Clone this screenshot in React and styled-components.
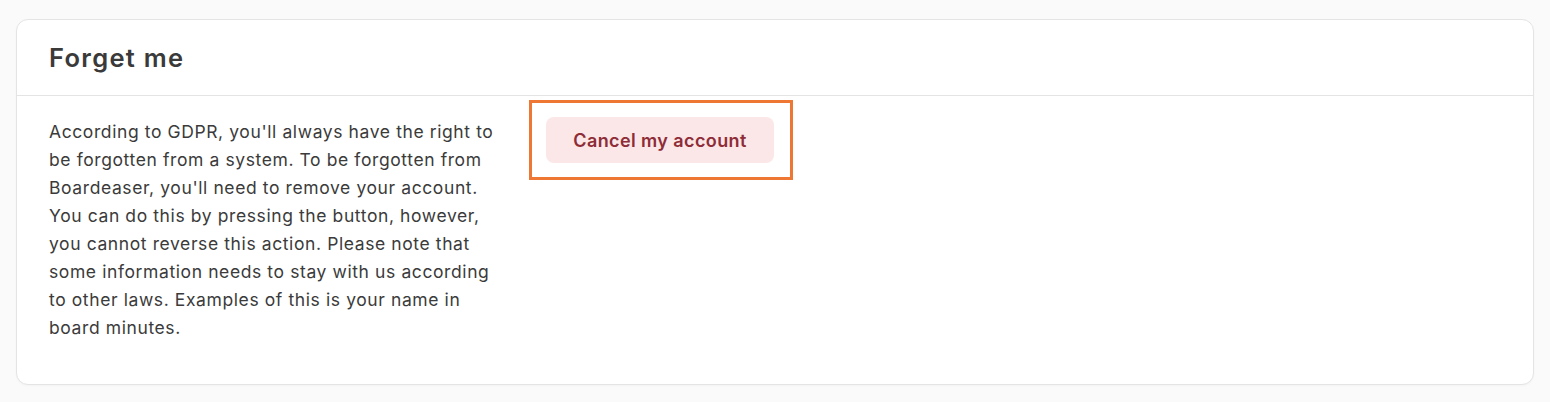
import React from "react";
import styled, { createGlobalStyle } from "styled-components";

const Global = createGlobalStyle`
  html, body { margin: 0; padding: 0; background: #fafafa; }
  body { font-family: Inter, "Open Sans", sans-serif; color: #3b3b3b; }
`;

const Page = styled.div`
  padding: 19px 16px 18px;
`;

const Card = styled.section`
  background: #ffffff;
  border: 1px solid #e4e4e4;
  border-radius: 12px;
  box-shadow: 0 1px 2px rgba(0, 0, 0, 0.03);
`;

const Header = styled.header`
  height: 75px;
  display: flex;
  align-items: center;
  padding: 0 32px;
  border-bottom: 1px solid #e4e4e4;
`;

const Title = styled.h2`
  margin: 0;
  font-size: 25.5px;
  font-weight: 600;
  color: #3a3a3a;
  letter-spacing: 1.3px;
`;

const Body = styled.div`
  display: grid;
  grid-template-columns: 450px auto;
  column-gap: 30px;
  align-items: start;
  padding: 4px 32px 42px;
`;

const Text = styled.p`
  margin: 0;
  padding-top: 18px;
  font-size: 17.5px;
  line-height: 28px;
  letter-spacing: 0.6px;
  color: #3b3b3b;
`;

const Highlight = styled.div`
  justify-self: start;
  border: 3px solid #ee7733;
  padding: 14px 16px 14px 14px;
`;

const DangerButton = styled.button`
  display: flex;
  align-items: center;
  justify-content: center;
  width: 228px;
  height: 46px;
  border: none;
  border-radius: 8px;
  background: #fbe7e7;
  color: #8e2c37;
  font-family: inherit;
  font-size: 18px;
  font-weight: 600;
  letter-spacing: 0.4px;
  cursor: pointer;
`;

export default function App() {
  return (
    <>
      <Global />
      <Page>
        <Card>
          <Header>
            <Title>Forget me</Title>
          </Header>
          <Body>
            <Text>
              According to GDPR, you'll always have the right to be forgotten
              from a system. To be forgotten from Boardeaser, you'll need to
              remove your account. You can do this by pressing the button,
              however, you cannot reverse this action. Please note that some
              information needs to stay with us according to other laws.
              Examples of this is your name in board minutes.
            </Text>
            <Highlight>
              <DangerButton>Cancel my account</DangerButton>
            </Highlight>
          </Body>
        </Card>
      </Page>
    </>
  );
}
